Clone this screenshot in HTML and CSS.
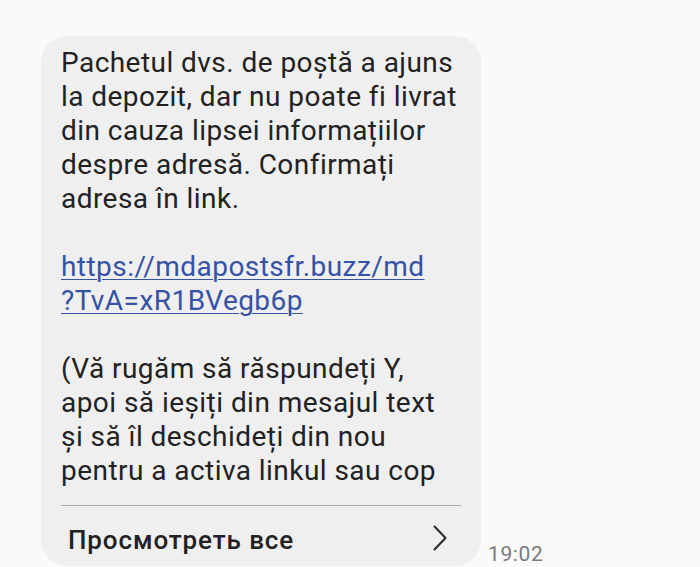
FILE: index.html
```html
<!DOCTYPE html>
<html lang="ro">
<head>
<meta charset="utf-8">
<link rel="stylesheet" href="styles.css">
</head>
<body>
<div class="row">
  <div class="bubble">
    <div class="body">
      <p class="para">Pachetul dvs. de poștă a ajuns<br>la depozit, dar nu poate fi livrat<br>din cauza lipsei informațiilor<br>despre adresă. Confirmați<br>adresa în link.</p>
      <p class="para"><a class="link" href="#">https://mdapostsfr.buzz/md<br>?TvA=xR1BVegb6p</a></p>
      <p class="para">(Vă rugăm să răspundeți Y,<br>apoi să ieșiți din mesajul text<br>și să îl deschideți din nou<br>pentru a activa linkul sau cop</p>
    </div>
    <div class="divider"></div>
    <div class="footer">
      <span class="more">Просмотреть все</span>
      <svg class="chev" width="14" height="26" viewBox="0 0 14 26"><path d="M1.5 1.5 L12.5 13 L1.5 24.5" fill="none" stroke="#2a2a2a" stroke-width="2" stroke-linecap="round" stroke-linejoin="round"/></svg>
    </div>
  </div>
  <div class="time">19:02</div>
</div>
</body>
</html>
```
FILE: styles.css
```css
html, body {
  margin: 0;
  padding: 0;
  background: #fafafa;
}
body {
  width: 700px;
  height: 567px;
  overflow: hidden;
  font-family: Roboto, "Liberation Sans", sans-serif;
}
.row {
  display: flex;
  align-items: flex-end;
  gap: 7px;
  padding: 36px 0 0 41px;
}
.bubble {
  width: 440px;
  background: #efefef;
  border-radius: 26px;
  box-sizing: border-box;
  padding: 10px 20px 0 20px;
}
.body {
  color: #222;
  font-size: 28px;
  line-height: 34px;
  letter-spacing: 0.45px;
  white-space: nowrap;
}
.para {
  margin: 0 0 34px 0;
}
.para:last-child {
  margin-bottom: 0;
}
.link {
  color: #3652a6;
  text-decoration: underline;
  text-decoration-thickness: 1px;
  text-underline-offset: 3px;
}
.divider {
  height: 1px;
  background: #a9a9a9;
  margin-top: 17px;
}
.footer {
  display: flex;
  align-items: center;
  justify-content: space-between;
  height: 60px;
  padding: 8px 14px 0 7px;
  box-sizing: border-box;
}
.more {
  font-size: 26px;
  font-weight: 500;
  letter-spacing: 0.9px;
  color: #222;
}
.chev {
  display: block;
  margin-top: -5px;
}
.time {
  font-size: 21px;
  letter-spacing: 0.6px;
  color: #7a7a7a;
  line-height: 1;
  margin-bottom: 1px;
}
```
